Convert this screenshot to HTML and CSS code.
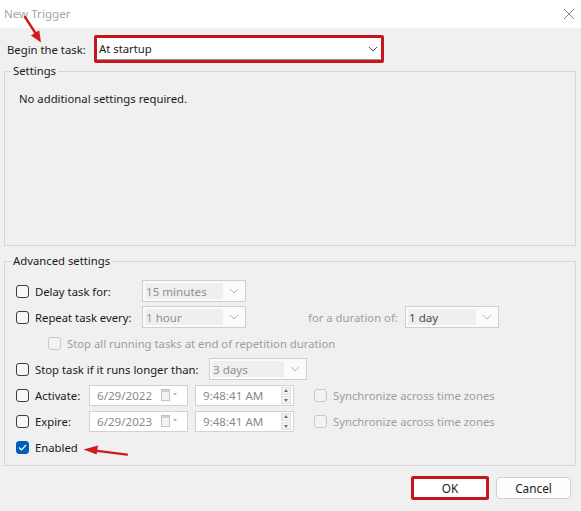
FILE: index.html
```html
<!DOCTYPE html>
<html lang="en">
<head>
<meta charset="utf-8">
<title>New Trigger</title>
<link rel="stylesheet" href="styles.css">
</head>
<body>
<div class="window">
  <div class="titlebar">
    <span class="title">New Trigger</span>
    <svg class="close" width="12" height="12" viewBox="0 0 12 12"><path d="M1 1 L11 11 M11 1 L1 11" stroke="#8a8a8a" stroke-width="1" fill="none"/></svg>
  </div>

  <div class="begin-row">
    <span class="begin-label">Begin the task:</span>
    <div class="mark mark-combo">
      <div class="combo-main">
        <span>At startup</span>
        <svg class="chev" width="10" height="6" viewBox="0 0 10 6"><path d="M1 1 L5 5 L9 1" stroke="#555" stroke-width="1" fill="none"/></svg>
      </div>
    </div>
  </div>

  <fieldset class="group settings">
    <legend>Settings</legend>
    <p class="note">No additional settings required.</p>
  </fieldset>

  <fieldset class="group advanced">
    <legend>Advanced settings</legend>

    <div class="row">
      <span class="opt w-delay"><span class="cb"></span>Delay task for:</span>
      <div class="combo w104"><span class="val">15 minutes</span><svg class="chev" width="10" height="6" viewBox="0 0 10 6"><path d="M1 1 L5 5 L9 1" stroke="#b5b5b5" stroke-width="1" fill="none"/></svg></div>
    </div>

    <div class="row">
      <span class="opt w-delay"><span class="cb"></span>Repeat task every:</span>
      <div class="combo w104"><span class="val">1 hour</span><svg class="chev" width="10" height="6" viewBox="0 0 10 6"><path d="M1 1 L5 5 L9 1" stroke="#b5b5b5" stroke-width="1" fill="none"/></svg></div>
      <span class="dim duration-label">for a duration of:</span>
      <div class="combo w94"><span class="val dark">1 day</span><svg class="chev" width="10" height="6" viewBox="0 0 10 6"><path d="M1 1 L5 5 L9 1" stroke="#b5b5b5" stroke-width="1" fill="none"/></svg></div>
    </div>

    <div class="row sub">
      <span class="opt dim"><span class="cb cb-dis"></span>Stop all running tasks at end of repetition duration</span>
    </div>

    <div class="row">
      <span class="opt w-stop"><span class="cb"></span>Stop task if it runs longer than:</span>
      <div class="combo w98"><span class="val">3 days</span><svg class="chev" width="10" height="6" viewBox="0 0 10 6"><path d="M1 1 L5 5 L9 1" stroke="#b5b5b5" stroke-width="1" fill="none"/></svg></div>
    </div>

    <div class="row">
      <span class="opt w-date"><span class="cb"></span>Activate:</span>
      <div class="field date"><span>6/29/2022</span>
        <svg class="cal" width="18" height="12" viewBox="0 0 18 12"><rect x="0.5" y="0.5" width="8" height="11" fill="#f4f4f4" stroke="#c4c4c4"/><rect x="1" y="1" width="7" height="2" fill="#d0d0d0"/><path d="M12 4 L16 4 L14 6.5 Z" fill="#b0b0b0"/></svg>
      </div>
      <div class="field time"><span>9:48:41 AM</span>
        <span class="spin"><span class="up"></span><span class="down"></span></span>
      </div>
      <span class="opt dim sync"><span class="cb cb-dis"></span>Synchronize across time zones</span>
    </div>

    <div class="row">
      <span class="opt w-date"><span class="cb"></span>Expire:</span>
      <div class="field date"><span>6/29/2023</span>
        <svg class="cal" width="18" height="12" viewBox="0 0 18 12"><rect x="0.5" y="0.5" width="8" height="11" fill="#f4f4f4" stroke="#c4c4c4"/><rect x="1" y="1" width="7" height="2" fill="#d0d0d0"/><path d="M12 4 L16 4 L14 6.5 Z" fill="#b0b0b0"/></svg>
      </div>
      <div class="field time"><span>9:48:41 AM</span>
        <span class="spin"><span class="up"></span><span class="down"></span></span>
      </div>
      <span class="opt dim sync"><span class="cb cb-dis"></span>Synchronize across time zones</span>
    </div>

    <div class="row">
      <span class="opt"><span class="cb cb-on"><svg width="9" height="7" viewBox="0 0 9 7"><path d="M1 3.5 L3.5 6 L8 1" stroke="#fff" stroke-width="1.2" fill="none"/></svg></span>Enabled</span>
    </div>
  </fieldset>

  <div class="buttons">
    <div class="mark mark-ok"><button class="btn">OK</button></div>
    <button class="btn cancel">Cancel</button>
  </div>

  <!-- red pointer arrows -->
  <svg class="arrow arrow-begin" width="30" height="40" viewBox="0 0 30 40">
    <path d="M4 7 L15 24" stroke="#d11a1a" stroke-width="2.4" stroke-linecap="round" fill="none"/>
    <path d="M20 32.5 L18.2 20.2 L10 25.4 Z" fill="#d11a1a"/>
  </svg>
  <svg class="arrow arrow-enabled" width="52" height="20" viewBox="0 0 52 20">
    <path d="M15 10.6 L47 14.6" stroke="#d11a1a" stroke-width="2.4" stroke-linecap="round" fill="none"/>
    <path d="M3.5 9.4 L18 5.4 L16.6 14.6 Z" fill="#d11a1a"/>
  </svg>
</div>
</body>
</html>
```

FILE: styles.css
```css
* { box-sizing: border-box; }

html, body {
  margin: 0;
  padding: 0;
}

body {
  width: 581px;
  height: 511px;
  overflow: hidden;
  background: #f0f0f0;
  font-family: "Noto Sans", "Open Sans", sans-serif;
  font-size: 11.3px;
  color: #1a1a1a;
}

.window {
  position: relative;
  width: 581px;
  height: 511px;
}

/* title bar */
.titlebar {
  height: 28px;
  background: #ffffff;
  display: flex;
  align-items: center;
  justify-content: space-between;
  padding: 0 6px 2px 4px;
}
.title {
  color: #a6a6a6;
  font-size: 11.6px;
}
.close { margin-top: 2px; }

/* "Begin the task" row */
.begin-row {
  display: flex;
  align-items: center;
  margin-top: 7px;
  padding-left: 7px;
  height: 28px;
}
.begin-label { width: 87px; }

.mark {
  border: 3px solid #c4161c;
  border-radius: 2px;
}
.mark-combo {
  width: 290px;
  height: 28px;
}
.combo-main {
  height: 100%;
  background: #ffffff;
  border-bottom: 1px solid #9a9a9a;
  display: flex;
  align-items: center;
  justify-content: space-between;
  padding: 0 3px 0 2px;
}

/* group boxes */
.group {
  margin: 0 5px 0 4px;
  border: 1px solid #d6d6d6;
  border-radius: 0;
  min-width: 0;
}
.group legend {
  padding: 0 2px;
  line-height: 16px;
  color: #1a1a1a;
}
.settings {
  height: 183px;
  padding: 0 0 0 14px;
}
.settings legend { margin-left: -8px; }
.note {
  margin: 12px 0 0;
  line-height: 16px;
}

.advanced {
  margin-top: 7px;
  height: 213px;
  padding: 11px 0 0 11px;
}
.advanced legend { margin-left: -5px; }

.row {
  display: flex;
  align-items: center;
  height: 22px;
  margin-top: 4px;
  white-space: nowrap;
}
.advanced legend + .row { margin-top: 0; }
.row.sub { padding-left: 32px; }

.opt {
  display: flex;
  align-items: center;
  flex: none;
}
.w-delay { width: 126px; }
.w-stop { width: 193px; }
.w-date { width: 73px; }

.dim { color: #9e9e9e; }

.cb {
  width: 13px;
  height: 13px;
  border: 1px solid #3c3c3c;
  border-radius: 3px;
  background: #f7f7f7;
  margin-right: 6px;
  flex: none;
  display: flex;
  align-items: center;
  justify-content: center;
}
.cb-dis {
  border-color: #c8c8c8;
  background: #f3f3f3;
}
.cb-on {
  border-color: #005fb8;
  background: #005fb8;
}

/* drop-down lists (disabled) */
.combo {
  height: 22px;
  border: 1px solid #cfcfcf;
  background: #fbfbfb;
  display: flex;
  align-items: center;
  padding: 2px 6px 2px 2px;
  flex: none;
}
.combo .val {
  flex: 1;
  height: 100%;
  background: #efefef;
  color: #8f8f8f;
  display: flex;
  align-items: center;
  padding-left: 1px;
  margin-right: 6px;
  font-size: 11.6px;
}
.combo .val.dark { color: #4a4a4a; }
.w104 { width: 104px; }
.w98 { width: 98px; }
.w94 { width: 94px; }

.duration-label {
  margin-left: 62px;
  width: 97px;
}

/* date / time pickers */
.field {
  height: 21px;
  width: 99px;
  border: 1px solid #d2d2d2;
  background: #ffffff;
  display: flex;
  align-items: center;
  justify-content: space-between;
  color: #8a8a8a;
  flex: none;
  font-size: 11.6px;
}
.date { padding: 0 8px 0 7px; }
.time {
  margin-left: 7px;
  padding: 0 2px 0 7px;
}
.spin {
  display: flex;
  flex-direction: column;
  gap: 1px;
}
.spin span {
  width: 10px;
  height: 8px;
  background: #f2f2f2;
  border: 1px solid #dedede;
  position: relative;
}
.spin .up::after,
.spin .down::after {
  content: "";
  position: absolute;
  left: 2px;
  border-left: 2.5px solid transparent;
  border-right: 2.5px solid transparent;
}
.spin .up::after {
  top: 1px;
  border-bottom: 3px solid #707070;
}
.spin .down::after {
  top: 2px;
  border-top: 3px solid #707070;
}

.sync { margin-left: 20px; }

/* dialog buttons */
.buttons {
  display: flex;
  justify-content: flex-end;
  align-items: center;
  gap: 7px;
  margin-top: 10px;
  padding-right: 10px;
}
.btn {
  font: inherit;
  font-size: 11.8px;
  color: #1a1a1a;
  background: #fdfdfd;
  border: 1px solid #d0d0d0;
  border-radius: 4px;
  height: 22px;
}
.mark-ok {
  width: 78px;
  height: 24px;
  display: flex;
}
.mark-ok .btn {
  width: 100%;
  height: 100%;
  border: none;
  border-radius: 0;
  background: #ffffff;
}
.cancel { width: 75px; }

/* annotation arrows */
.arrow { position: absolute; }
.arrow-begin { left: 21px; top: 10px; }
.arrow-enabled { left: 80px; top: 440px; }
```
